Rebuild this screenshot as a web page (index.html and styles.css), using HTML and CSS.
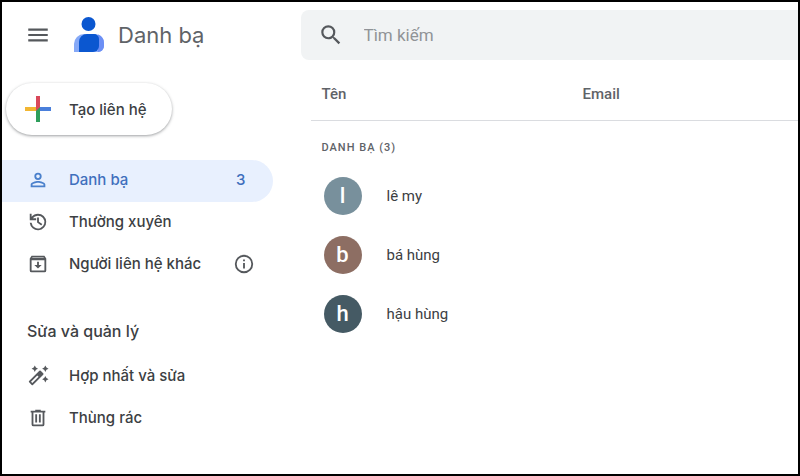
FILE: index.html
```html
<!DOCTYPE html>
<html lang="vi">
<head>
    <meta charset="UTF-8">
    <meta name="viewport" content="width=device-width, initial-scale=1.0">
    <title>Danh bạ</title>
    <link rel="stylesheet" href="styles.css">
</head>
<body>
    <aside class="sidebar">
        <header class="brand">
            <button class="menu-button" type="button" aria-label="Menu">
                <svg class="icon" viewBox="0 0 24 24"><path d="M3 18h18v-2H3v2zm0-5h18v-2H3v2zm0-7v2h18V6H3z"/></svg>
            </button>
            <svg class="logo" viewBox="0 0 30 36">
                <path fill="#86a9f7" d="M0 35V27a10 10 0 0 1 10-10h11a9 9 0 0 1 9 9v3a6 6 0 0 1-6 6z"/>
                <path fill="#6c8ff5" d="M24 17.500a9 9 0 0 1 6 8.500v3a6 6 0 0 1-6 6z"/>
                <path fill="#0b57d0" d="M5 35V25a8 8 0 0 1 8-8h7a5 5 0 0 1 5 5v7a6 6 0 0 1-6 6z"/>
                <circle fill="#0b57d0" cx="14.500" cy="7" r="7"/>
            </svg>
            <h1 class="brand-name">Danh bạ</h1>
        </header>

        <button class="create-button" type="button">
            <svg class="plus" viewBox="0 0 26 26">
                <path fill="#d9485a" d="M11 0h4v15h-4z"/>
                <path fill="#f2b632" d="M0 11h11v4H0z"/>
                <path fill="#4a7fdb" d="M15 11h11v4H15z"/>
                <path fill="#2e9e5b" d="M11 15l4-4v15h-4z"/>
            </svg>
            <span>Tạo liên hệ</span>
        </button>

        <nav>
            <ul class="nav-list">
                <li>
                    <a class="nav-item active" href="#">
                        <svg class="icon" viewBox="0 0 24 24"><path d="M12 4a4 4 0 1 0 0 8 4 4 0 0 0 0-8zm0 6a2 2 0 1 1 0-4 2 2 0 0 1 0 4zm0 3c-2.700 0-8 1.300-8 4v3h16v-3c0-2.700-5.300-4-8-4zm6 5H6v-1c.200-.700 3.300-2 6-2s5.800 1.300 6 2z"/></svg>
                        <span>Danh bạ</span>
                        <span class="count">3</span>
                    </a>
                </li>
                <li>
                    <a class="nav-item" href="#">
                        <svg class="icon" viewBox="0 0 24 24"><path d="M12 3a9 9 0 0 0-7 3.350V3H3v7h7V8H6.260A7 7 0 1 1 5 12.900H3A9 9 0 1 0 12 3zm-1 4v5.600l4.500 3.300 1.200-1.600-3.700-2.700V7z"/></svg>
                        <span>Thường xuyên</span>
                    </a>
                </li>
                <li>
                    <a class="nav-item" href="#">
                        <svg class="icon" viewBox="0 0 24 24"><path d="M5 3h14l2 3v13a2 2 0 0 1-2 2H5a2 2 0 0 1-2-2V6zm1 1.600L5.600 5.200h12.800L18 4.600zM5 8v11h14V8zm6 1.500h2V13h3l-4 4-4-4h3z"/></svg>
                        <span>Người liên hệ khác</span>
                        <svg class="icon info" viewBox="0 0 24 24"><path d="M11 7h2v2h-2zm0 4h2v6h-2zm1-9a10 10 0 1 0 0 20 10 10 0 0 0 0-20zm0 18a8 8 0 1 1 0-16 8 8 0 0 1 0 16z"/></svg>
                    </a>
                </li>
            </ul>

            <h2 class="nav-title">Sửa và quản lý</h2>
            <ul class="nav-list">
                <li>
                    <a class="nav-item" href="#">
                        <svg class="icon" viewBox="0 0 24 24"><path d="M20 7.500l1.200-2.300L23.500 4l-2.300-1.200L20 .500l-1.200 2.300L16.500 4l2.300 1.200zM8.500 7.500l1.200-2.300L12 4 9.700 2.800 8.500.500 7.300 2.800 5 4l2.300 1.200zM20 12l-1.200 2.300-2.300 1.200 2.300 1.200L20 19l1.200-2.300 2.300-1.200-2.300-1.200zM17.700 9.100l-2.800-2.800a1 1 0 0 0-1.400 0L2.300 17.500a1 1 0 0 0 0 1.400l2.800 2.800a1 1 0 0 0 1.400 0L17.700 10.500a1 1 0 0 0 0-1.400zM5.800 19.600l-1.400-1.400 6.800-6.800 1.400 1.400z"/></svg>
                        <span>Hợp nhất và sửa</span>
                    </a>
                </li>
                <li>
                    <a class="nav-item" href="#">
                        <svg class="icon" viewBox="0 0 24 24"><path d="M15 4V3H9v1H4v2h1v13a2 2 0 0 0 2 2h10a2 2 0 0 0 2-2V6h1V4zm2 15H7V6h10zM9 8h2v9H9zm4 0h2v9h-2z"/></svg>
                        <span>Thùng rác</span>
                    </a>
                </li>
            </ul>
        </nav>
    </aside>

    <main class="content">
        <form class="search">
            <label for="search" class="search-label" aria-label="Tìm kiếm">
                <svg class="icon" viewBox="0 0 24 24"><path d="M15.500 14h-.790l-.280-.270A6.470 6.470 0 0 0 16 9.500 6.500 6.500 0 1 0 9.500 16c1.610 0 3.090-.590 4.230-1.570l.270.280v.790l5 4.990L20.490 19zm-6 0a4.500 4.500 0 1 1 0-9 4.500 4.500 0 0 1 0 9z"/></svg>
            </label>
            <input id="search" class="search-input" type="text" placeholder="Tìm kiếm">
        </form>

        <table class="contacts">
            <thead>
                <tr>
                    <th class="name-col" scope="col">Tên</th>
                    <th scope="col">Email</th>
                </tr>
            </thead>
            <tbody>
                <tr>
                    <th class="group" colspan="2" scope="rowgroup">DANH BẠ (3)</th>
                </tr>
                <tr>
                    <td><div class="person"><span class="avatar blue">l</span>lê my</div></td>
                    <td></td>
                </tr>
                <tr>
                    <td><div class="person"><span class="avatar brown">b</span>bá hùng</div></td>
                    <td></td>
                </tr>
                <tr>
                    <td><div class="person"><span class="avatar dark">h</span>hậu hùng</div></td>
                    <td></td>
                </tr>
            </tbody>
        </table>
    </main>
</body>
</html>
```

FILE: styles.css
```css
* {
    box-sizing: border-box;
}
body {
    display: grid;
    grid-template-columns: 3fr 5fr;
    min-height: 100vh;
    margin: 0;
    border: 2px solid #000;
    background: #fff;
    color: #3c4043;
    font-family: Inter, "Noto Sans", sans-serif;
    font-size: 14px;
    font-weight: 500;
}
button {
    font: inherit;
    color: inherit;
    cursor: pointer;
}
.icon {
    display: block;
    flex: none;
    width: 22px;
    height: 22px;
    fill: #55585c;
}

.sidebar {
    padding-right: 28px;
}
.brand {
    display: flex;
    align-items: center;
    height: 66px;
    padding-left: 23px;
}
.menu-button {
    padding: 0;
    border: none;
    background: none;
}
.menu-button .icon {
    width: 26px;
    height: 26px;
}
.logo {
    width: 30px;
    height: 36px;
    margin: 0 14px 0 23px;
}
.brand-name {
    margin: 0;
    color: #5f6368;
    font-size: 22px;
    font-weight: 400;
}
.create-button {
    display: flex;
    align-items: center;
    gap: 18px;
    height: 52px;
    margin: 15px 0 25px 4px;
    padding: 0 25px 0 19px;
    border: none;
    border-radius: 26px;
    background: #fff;
    box-shadow: 0 1px 3px rgba(60, 64, 67, 0.5);
    font-size: 15px;
}
.plus {
    width: 26px;
    height: 26px;
}

.nav-list {
    margin: 0;
    padding: 0;
    list-style: none;
}
.nav-item {
    display: flex;
    align-items: center;
    gap: 20px;
    height: 42px;
    padding: 0 18px 3px 25px;
    border-radius: 0 21px 21px 0;
    color: #3c4043;
    font-size: 15px;
    text-decoration: none;
}
.nav-item.active {
    background: #e8f0fe;
    color: #3f6fbd;
}
.nav-item.active .icon {
    fill: #4a80cc;
}
.count {
    margin-left: auto;
    padding-right: 9px;
}
.nav-item .info {
    margin-left: auto;
}
.nav-title {
    margin: 34px 0 14px 25px;
    font-size: 16px;
    font-weight: 500;
    line-height: 22px;
}

.content {
    padding-top: 8px;
    font-family: Roboto, "Noto Sans", sans-serif;
}
.search {
    display: flex;
    align-items: center;
    gap: 20px;
    height: 50px;
    padding-left: 17px;
    border-radius: 8px 0 0 8px;
    background: #f1f3f4;
}
.search-label .icon {
    width: 26px;
    height: 26px;
}
.search-input {
    flex: 1;
    min-width: 0;
    padding: 0;
    border: none;
    outline: none;
    background: none;
    color: #3c4043;
    font-family: inherit;
    font-size: 17px;
}
.search-input::placeholder {
    color: #909397;
}

.contacts {
    width: calc(100% - 10px);
    margin-left: 10px;
    border-collapse: collapse;
    table-layout: fixed;
    text-align: left;
}
.contacts th,
.contacts td {
    padding: 0;
}
.contacts thead th {
    height: 60px;
    padding-top: 8px;
    border-bottom: 1px solid #dadce0;
    color: #5f6368;
    font-size: 15px;
    font-weight: 500;
}
.contacts .name-col {
    width: 272px;
    padding-left: 11px;
}
.contacts .group {
    height: 46px;
    padding: 8px 0 0 11px;
    color: #5f6368;
    font-size: 11px;
    font-weight: 500;
    letter-spacing: 1px;
}
.person {
    display: flex;
    align-items: center;
    gap: 25px;
    height: 59px;
    padding-left: 13px;
    font-size: 15px;
    font-weight: 400;
}
.avatar {
    display: flex;
    justify-content: center;
    align-items: center;
    width: 38px;
    height: 38px;
    border-radius: 50%;
    color: #fff;
    font-size: 22px;
    font-weight: 500;
}
.blue {
    background: #78909c;
}
.brown {
    background: #8d6e63;
}
.dark {
    background: #455a64;
}
```
